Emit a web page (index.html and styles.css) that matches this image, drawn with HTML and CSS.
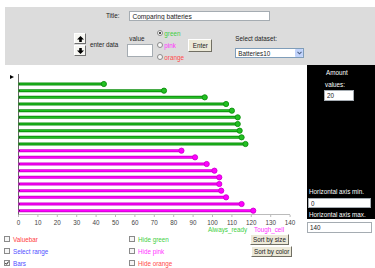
FILE: index.html
```html
<!DOCTYPE html>
<html><head>
<meta charset="utf-8">
<link rel="stylesheet" href="styles.css">
</head><body>

<!--input panel-->
<div class="controls">
	<div class="titleRow">
		<span class="lbl">Title:</span>
		<input class="field titleInput" type="text" value="Comparing batteries">
	</div>
	<div class="dataRow">
		<div class="arrows">
			<span class="arrowBtn"><svg width="7" height="6" viewBox="0 0 7 6"><path d="M3.5 0 L7 3.5 L4.8 3.5 L4.8 6 L2.2 6 L2.2 3.5 L0 3.5 Z" fill="#000"/></svg></span>
			<span class="arrowBtn"><svg width="7" height="6" viewBox="0 0 7 6"><path d="M3.5 6 L7 2.5 L4.8 2.5 L4.8 0 L2.2 0 L2.2 2.5 L0 2.5 Z" fill="#000"/></svg></span>
		</div>
		<span class="lbl enterLbl">enter data</span>
		<div class="valueBox">
			<span class="lbl">value</span>
			<input class="field valueInput" type="text" value="">
		</div>
		<div class="radios">
			<div class="radio cGreen"><span class="circle on"></span>green</div>
			<div class="radio cPink"><span class="circle"></span>pink</div>
			<div class="radio cOrange"><span class="circle"></span>orange</div>
		</div>
		<span class="btn enterBtn">Enter</span>
		<div class="datasetBox">
			<span class="lbl">Select dataset:</span>
			<div class="field select">Batteries10<span class="drop"><svg width="5" height="4" viewBox="0 0 5 4"><path d="M0.5 0.8 L2.5 2.8 L4.5 0.8" fill="none" stroke="#4d6185" stroke-width="1.1"/></svg></span></div>
		</div>
	</div>
</div>

<!--chart + side panel-->
<div class="mainRow">
	<svg class="chart" id="chart" width="307" height="168"></svg>
	<div class="side">
		<div class="panel">
			<div class="amountLbl">Amount</div>
			<div class="valuesLbl">values:</div>
			<input class="field amountInput" type="text" value="20">
			<div class="axisBox">
				<div class="axisLbl">Horizontal axis min.</div>
				<input class="field axisInput" type="text" value="0">
				<div class="axisLbl">Horizontal axis max.</div>
			</div>
		</div>
		<input class="field maxInput" type="text" value="140">
	</div>
</div>

<!--options-->
<div class="bottomRow">
	<div class="col1">
		<div class="check cRed"><span class="box"></span>Valuebar</div>
		<div class="check cBlue"><span class="box"></span>Select range</div>
		<div class="check cBlue"><span class="box"><svg width="4" height="4" viewBox="0 0 4 4"><path d="M0.3 2 L1.5 3.3 L3.7 0.5" fill="none" stroke="#000" stroke-width="0.9"/></svg></span>Bars</div>
	</div>
	<div class="col2">
		<div class="check cGreen"><span class="box"></span>Hide green</div>
		<div class="check cPink"><span class="box"></span>Hide pink</div>
		<div class="check cOrange"><span class="box"></span>Hide orange</div>
	</div>
	<div class="col3">
		<span class="btn">Sort by size</span>
		<span class="btn">Sort by color</span>
	</div>
</div>

<script type="text/javascript">

var green = [44, 75, 96, 107, 110, 113, 113, 114, 115, 117];
var pink = [84, 91, 97, 101, 103.5, 103.5, 104.5, 107, 115, 121];

var x0 = 18.5, k = 1.94, y0 = 19, step = 6.667;
var ns = "http://www.w3.org/2000/svg";
var svg = document.getElementById("chart");

function el(name, attrs){
	var e = document.createElementNS(ns, name);
	for (var a in attrs) e.setAttribute(a, attrs[a]);
	svg.appendChild(e);
	return e;
}

function bar(i, v, dark, light){
	var y = y0 + i*step;
	var x = x0 + v*k;
	el("line", {x1:x0, y1:y, x2:x, y2:y, stroke:dark, "stroke-width":3});
	el("line", {x1:x0, y1:y, x2:x, y2:y, stroke:light, "stroke-width":1.2});
	el("rect", {x:x0+0.5, y:y-0.5, width:1, height:1, fill:"#222"});
	el("circle", {cx:x, cy:y, r:2.6, fill:light, stroke:dark, "stroke-width":0.9});
}

//axis
el("line", {x1:x0, y1:9, x2:x0, y2:150, stroke:"#666", "stroke-width":1});
el("line", {x1:x0, y1:149.5, x2:x0+140*k, y2:149.5, stroke:"#bbb", "stroke-width":1});
el("path", {d:"M10 10 L14 12 L10 14 Z", fill:"#000"});

for (var t = 0; t <= 140; t += 10){
	var tx = x0 + t*k;
	el("line", {x1:tx, y1:150, x2:tx, y2:152, stroke:"#aaa", "stroke-width":0.8});
	var lbl = el("text", {x:tx, y:159.5, "text-anchor":"middle", "class":"tick"});
	lbl.textContent = t;
}

for (var i = 0; i < green.length; i++) bar(i, green[i], "#0c8f0c", "#22c022");
for (var j = 0; j < pink.length; j++) bar(10+j, pink[j], "#d000d0", "#ff00ff");

var l1 = el("text", {x:208, y:166.5, "class":"legend", fill:"#3fcf3f"});
l1.textContent = "Always_ready";
var l2 = el("text", {x:254, y:166.5, "class":"legend", fill:"#ff33ff"});
l2.textContent = "Tough_cell";

</script>

</body></html>
```

FILE: styles.css
```css
body		{ margin:0;
		  width:375px;
		  height:268px;
		  overflow:hidden;
		  background:#fff;
		  color:#222;
		  font-family:"Liberation Sans", Arial, sans-serif;
		  font-size:6.3px;
}

.field		{ box-sizing:border-box;
		  margin:0;
		  padding:0 2px;
		  border:1px solid #a5acb2;
		  background:#fff;
		  color:#222;
		  font:inherit;
		  outline:none;
}

.lbl		{ line-height:8px; }

/* gray input panel */
.controls	{ margin:7px 0 0 5px;
		  height:58px;
		  box-sizing:border-box;
		  padding-top:4px;
		  background:#dcdcdc;
}

.titleRow	{ display:flex;
		  align-items:center;
		  gap:10px;
		  height:10px;
		  padding-left:101px;
}

.titleInput	{ width:141px; height:10px; font-size:6.6px; }

.dataRow	{ display:flex;
		  align-items:flex-start;
		  margin-top:6px;
		  padding-left:69px;
}

.arrows		{ display:flex;
		  flex-direction:column;
		  gap:1px;
		  margin-top:6px;
}

.arrowBtn	{ display:flex;
		  align-items:center;
		  justify-content:center;
		  width:12px;
		  height:11px;
		  box-sizing:border-box;
		  background:#f6f6f2;
		  border:1px solid;
		  border-color:#fff #6f6f6f #6f6f6f #fff;
}

.enterLbl	{ margin:14px 0 0 4px; }

.valueBox	{ display:flex;
		  flex-direction:column;
		  margin:8px 0 0 9px;
}

.valueBox .lbl	{ padding-left:2px; margin-bottom:1px; }

.valueInput	{ width:26px; height:13px; }

.radios		{ width:31px; margin-left:4px; }

.radio		{ display:flex;
		  align-items:center;
		  gap:1px;
		  height:12px;
}

.circle		{ position:relative;
		  width:6px;
		  height:6px;
		  box-sizing:border-box;
		  border:1px solid #8a8a8a;
		  border-radius:50%;
		  background:#f8f8f8;
}

.circle.on::after	{ content:"";
		  position:absolute;
		  left:1px;
		  top:1px;
		  width:2px;
		  height:2px;
		  border-radius:50%;
		  background:#111;
}

.cGreen		{ color:#3fcf3f; }
.cPink		{ color:#ff33ff; }
.cOrange	{ color:#ff4a4a; }
.cRed		{ color:#ff4040; }
.cBlue		{ color:#5050ff; }

.btn		{ display:block;
		  box-sizing:border-box;
		  height:11px;
		  line-height:9px;
		  padding:0 2px;
		  text-align:center;
		  color:#222;
		  background:#ece9d8;
		  border:1px solid;
		  border-color:#fff #716f64 #716f64 #fff;
		  white-space:nowrap;
}

.enterBtn	{ width:24px; height:13px; line-height:11px; margin-top:12px; }

.datasetBox	{ display:flex;
		  flex-direction:column;
		  margin:8px 0 0 23px;
}

.select		{ display:flex;
		  align-items:center;
		  justify-content:space-between;
		  width:69px;
		  height:10px;
		  margin-top:5px;
		  padding-right:0;
		  border-color:#7f9db9;
}

.drop		{ display:flex;
		  align-items:center;
		  justify-content:center;
		  width:8px;
		  height:8px;
		  background:#c1d3fb;
		  border-radius:1px;
}

/* chart and side panel */
.mainRow	{ display:flex; height:168px; }

.chart		{ display:block; flex:none; overflow:visible; }

.chart .tick	{ font-size:6.3px; fill:#444; }
.chart .legend	{ font-size:6.3px; }

.side		{ width:68px; display:flex; flex-direction:column; }

.panel		{ display:flex;
		  flex-direction:column;
		  align-items:flex-start;
		  height:154px;
		  background:#000;
		  color:#fff;
}

.amountLbl	{ padding:4px 0 0 19px; line-height:8px; }
.valuesLbl	{ padding:3.5px 0 0 18px; line-height:8px; }

.amountInput	{ width:30px; height:11px; margin:1.5px 0 0 17px; }

.axisBox	{ margin-top:auto; align-self:stretch; }

.axisLbl	{ padding-left:2px; line-height:8px; }

.axisInput	{ display:block; width:63px; height:10px; margin:2px 0 3px 1px; }

.maxInput	{ width:65px; height:11px; margin-top:3px; }

/* option checkboxes */
.bottomRow	{ display:flex; padding-left:4px; }

.col1		{ width:125px; }
.col2		{ width:121px; }

.col3		{ display:flex;
		  flex-direction:column;
		  align-items:flex-start;
		  gap:1px;
		  margin-top:1px;
}

.col3 .btn + .btn	{ margin-left:1px; }

.check		{ display:flex;
		  align-items:center;
		  gap:3px;
		  height:12px;
}

.box		{ display:flex;
		  align-items:center;
		  justify-content:center;
		  width:6px;
		  height:6px;
		  box-sizing:border-box;
		  border:1px solid #8a8a8a;
		  background:#f6f6f6;
}
```
